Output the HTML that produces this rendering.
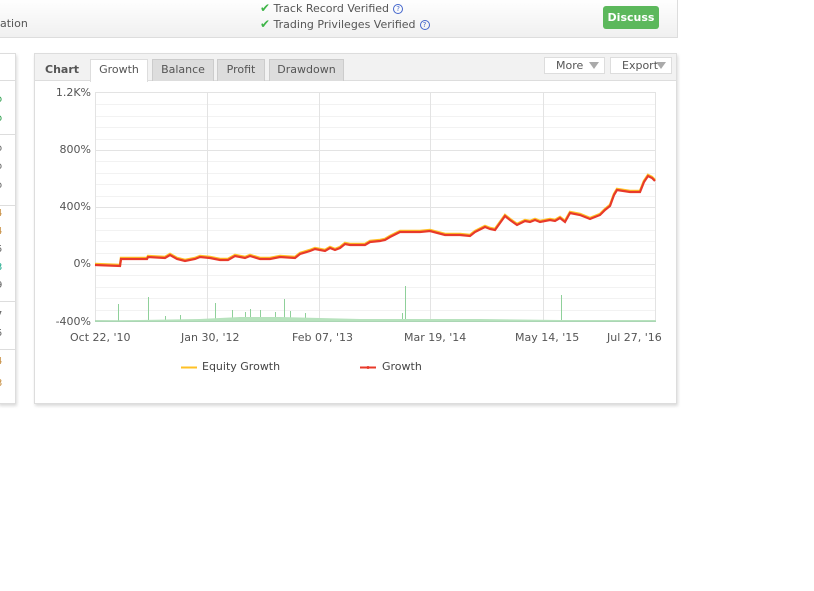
<!DOCTYPE html>
<html><head><meta charset="utf-8"><style>
body{margin:0;width:814px;height:591px;background:#fff;font-family:"DejaVu Sans","Liberation Sans",sans-serif;position:relative;overflow:hidden;font-size:11px;color:#444}
.top{position:absolute;left:-2px;top:-2px;width:678px;height:38px;border:1px solid #ddd;background:linear-gradient(#fff,#f0f0f0)}
.abs{position:absolute}
.chk{color:#3eb548;font-weight:bold;font-size:12px}
.q{display:inline-block;width:8px;height:8px;border:1px solid #4466cc;border-radius:50%;color:#4466cc;font-size:7px;line-height:8px;text-align:center;margin-left:4px;vertical-align:1px}
.btn{position:absolute;left:603px;top:6px;width:56px;height:23px;background:#5cb85c;border-radius:3px;color:#fff;font-weight:bold;font-size:11px;text-align:center;line-height:23px}
.panel{position:absolute;border:1px solid #ddd;background:#fff;box-shadow:1px 2px 3px rgba(0,0,0,.15)}
.hdr{position:absolute;left:0;top:0;right:0;height:26px;background:#f2f2f2;border-bottom:1px solid #ddd}
.tab{position:absolute;top:5px;height:21px;line-height:20px;text-align:center;background:#ddd;border:1px solid #ccc;border-bottom:none;color:#555;font-size:11px}
.dd{position:absolute;top:3px;height:17px;box-sizing:border-box;background:#fff;border:1px solid #ddd;line-height:16px;font-size:11px;color:#555;padding-left:11px}
.dd:after{content:"";position:absolute;right:5px;top:4px;border:5px solid transparent;border-top:7px solid #aaa}
.yl{position:absolute;right:0;font-size:11px;color:#555;text-align:right;width:60px}
.xl{position:absolute;top:331px;font-size:11px;color:#555}
.lv{position:absolute;left:-4px;font-size:10px;color:#c58a3a}
</style></head><body>
<div class="top"></div>
<div class="abs" style="left:0;top:17px;font-size:11px;color:#555">ation</div>
<div class="abs" style="left:260px;top:1px;color:#555"><span class="chk">✔</span> Track Record Verified<span class="q">?</span></div>
<div class="abs" style="left:260px;top:17px;color:#555"><span class="chk">✔</span> Trading Privileges Verified<span class="q">?</span></div>
<div class="btn">Discuss</div>

<div class="panel" style="left:-2px;top:53px;width:16px;height:349px">
<div style="position:absolute;left:0;right:0;top:26px;border-top:1px solid #ddd"></div>
<div style="position:absolute;left:0;right:0;top:80px;border-top:1px solid #ddd"></div>
<div style="position:absolute;left:0;right:0;top:151px;border-top:1px solid #ddd"></div>
<div style="position:absolute;left:0;right:0;top:247px;border-top:1px solid #ddd"></div>
<div style="position:absolute;left:0;right:0;top:295px;border-top:1px solid #ddd"></div>
</div>
<div class="lv" style="top:94px;color:#2a9d4a">o</div>
<div class="lv" style="top:113px;color:#2a9d4a">o</div>
<div class="lv" style="top:143px;color:#666">o</div>
<div class="lv" style="top:161px;color:#666">o</div>
<div class="lv" style="top:180px;color:#666">o</div>
<div class="lv" style="top:208px">4</div>
<div class="lv" style="top:226px">4</div>
<div class="lv" style="top:244px;color:#666">5</div>
<div class="lv" style="top:262px;color:#1aa88a">3</div>
<div class="lv" style="top:280px;color:#666">9</div>
<div class="lv" style="top:310px;color:#666">7</div>
<div class="lv" style="top:328px;color:#666">5</div>
<div class="lv" style="top:356px">4</div>
<div class="lv" style="top:378px">3</div>

<div class="panel" style="left:34px;top:53px;width:641px;height:349px">
<div class="hdr"></div>
<div class="abs" style="left:10px;top:9px;font-weight:bold;color:#555;font-size:11px">Chart</div>
<div class="tab" style="left:55px;width:56px;background:#fff;border-color:#ddd;height:22px">Growth</div>
<div class="tab" style="left:117px;width:60px">Balance</div>
<div class="tab" style="left:182px;width:46px">Profit</div>
<div class="tab" style="left:234px;width:73px">Drawdown</div>
<div class="dd" style="left:509px;width:61px">More</div>
<div class="dd" style="left:575px;width:62px">Export</div>
</div>

<div class="yl" style="left:31px;top:86px">1.2K%</div>
<div class="yl" style="left:31px;top:143px">800%</div>
<div class="yl" style="left:31px;top:200px">400%</div>
<div class="yl" style="left:31px;top:257px">0%</div>
<div class="yl" style="left:31px;top:315px">-400%</div>
<div class="xl" style="left:70px">Oct 22, '10</div>
<div class="xl" style="left:181px">Jan 30, '12</div>
<div class="xl" style="left:292px">Feb 07, '13</div>
<div class="xl" style="left:404px">Mar 19, '14</div>
<div class="xl" style="left:515px">May 14, '15</div>
<div class="xl" style="left:607px">Jul 27, '16</div>

<svg class="abs" style="left:0;top:0" width="814" height="591">
<g stroke="#f2f2f2" stroke-width="1">
<line x1="95" x2="656" y1="104.5" y2="104.5"/><line x1="95" x2="656" y1="116.5" y2="116.5"/><line x1="95" x2="656" y1="127.5" y2="127.5"/><line x1="95" x2="656" y1="139.5" y2="139.5"/>
<line x1="95" x2="656" y1="161.5" y2="161.5"/><line x1="95" x2="656" y1="173.5" y2="173.5"/><line x1="95" x2="656" y1="184.5" y2="184.5"/><line x1="95" x2="656" y1="196.5" y2="196.5"/>
<line x1="95" x2="656" y1="218.5" y2="218.5"/><line x1="95" x2="656" y1="230.5" y2="230.5"/><line x1="95" x2="656" y1="241.5" y2="241.5"/><line x1="95" x2="656" y1="253.5" y2="253.5"/>
<line x1="95" x2="656" y1="275.5" y2="275.5"/><line x1="95" x2="656" y1="287.5" y2="287.5"/><line x1="95" x2="656" y1="298.5" y2="298.5"/><line x1="95" x2="656" y1="310.5" y2="310.5"/>
</g>
<g stroke="#e3e3e3" stroke-width="1">
<line x1="95" x2="656" y1="92.5" y2="92.5"/><line x1="95" x2="656" y1="150.5" y2="150.5"/><line x1="95" x2="656" y1="207.5" y2="207.5"/><line x1="95" x2="656" y1="264.5" y2="264.5"/>
<line x1="95.5" x2="95.5" y1="92" y2="322"/><line x1="207.5" x2="207.5" y1="92" y2="322"/><line x1="319.5" x2="319.5" y1="92" y2="322"/><line x1="430.5" x2="430.5" y1="92" y2="322"/><line x1="543.5" x2="543.5" y1="92" y2="322"/><line x1="655.5" x2="655.5" y1="92" y2="322"/>
</g>
<line x1="95" x2="656" y1="321.5" y2="321.5" stroke="#cdd" />
<path d="M95 321 H656" stroke="#9fd4a6" stroke-width="1.5"/>
<g stroke="#8fd09a" stroke-width="1">
<line x1="118.5" x2="118.5" y1="321" y2="304"/><line x1="148.5" x2="148.5" y1="321" y2="297"/><line x1="215.5" x2="215.5" y1="321" y2="303"/><line x1="284.5" x2="284.5" y1="321" y2="299"/><line x1="405.5" x2="405.5" y1="321" y2="286"/><line x1="561.5" x2="561.5" y1="321" y2="295"/>
<line x1="165.5" x2="165.5" y1="321" y2="316"/><line x1="180.5" x2="180.5" y1="321" y2="315"/><line x1="232.5" x2="232.5" y1="321" y2="310"/><line x1="245.5" x2="245.5" y1="321" y2="312"/><line x1="250.5" x2="250.5" y1="321" y2="309"/><line x1="260.5" x2="260.5" y1="321" y2="310"/><line x1="275.5" x2="275.5" y1="321" y2="312"/><line x1="290.5" x2="290.5" y1="321" y2="311"/><line x1="305.5" x2="305.5" y1="321" y2="313"/><line x1="402.5" x2="402.5" y1="321" y2="313"/>
</g>
<path d="M95 321 L140 320 200 319 240 317 280 317 320 318 360 319 420 319 480 319 560 320 620 320 656 320 L656 321 Z" fill="#b7e2bd"/>
<path d="M95 265 L120 266 121 259 147 259 148 257 165 258 170 255 177 259 185 261 195 259 200 257 210 258 220 260 228 260 235 256 245 258 250 256 260 259 270 259 280 257 295 258 300 254 310 251 315 249 325 251 330 248 335 250 340 248 345 244 350 245 355 245 365 245 370 242 380 241 385 240 390 237 400 232 410 232 420 232 430 231 445 235 460 235 470 236 475 232 485 227 490 229 495 230 500 223 505 216 510 220 517 225 525 221 530 222 535 220 540 222 550 220 555 221 560 218 565 222 570 213 580 215 590 219 600 215 605 210 610 206 614 195 617 190 630 192 640 192 644 182 648 176 652 178 655 181" fill="none" stroke="#ffc125" stroke-width="2.5" transform="translate(0,-1)"/>
<path d="M95 265 L120 266 121 259 147 259 148 257 165 258 170 255 177 259 185 261 195 259 200 257 210 258 220 260 228 260 235 256 245 258 250 256 260 259 270 259 280 257 295 258 300 254 310 251 315 249 325 251 330 248 335 250 340 248 345 244 350 245 355 245 365 245 370 242 380 241 385 240 390 237 400 232 410 232 420 232 430 231 445 235 460 235 470 236 475 232 485 227 490 229 495 230 500 223 505 216 510 220 517 225 525 221 530 222 535 220 540 222 550 220 555 221 560 218 565 222 570 213 580 215 590 219 600 215 605 210 610 206 614 195 617 190 630 192 640 192 644 182 648 176 652 178 655 181" fill="none" stroke="#e8392a" stroke-width="2.2"/>
<line x1="181" x2="197" y1="367.5" y2="367.5" stroke="#ffc125" stroke-width="2"/>
<line x1="360" x2="376" y1="367.5" y2="367.5" stroke="#e8392a" stroke-width="2"/>
<circle cx="368" cy="367.5" r="1.5" fill="#e8392a"/>
</svg>
<div class="abs" style="left:202px;top:360px;color:#444">Equity Growth</div>
<div class="abs" style="left:382px;top:360px;color:#444">Growth</div>
</body></html>
